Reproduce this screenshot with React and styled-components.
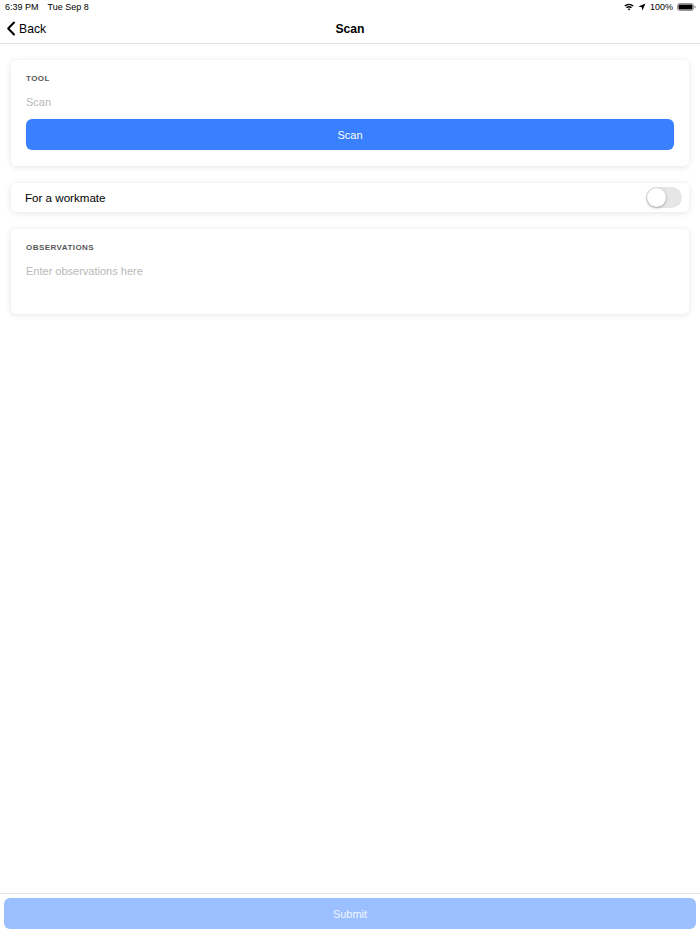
import React from "react";
import styled, { createGlobalStyle } from "styled-components";

const Global = createGlobalStyle`
  html, body { margin: 0; padding: 0; background: #ffffff; }
  body { font-family: "Liberation Sans", Arial, sans-serif; -webkit-font-smoothing: antialiased; }
  * { box-sizing: border-box; }
`;

const Page = styled.div`
  height: 934px;
  display: flex;
  flex-direction: column;
  background: #ffffff;
`;

const StatusBar = styled.div`
  height: 14px;
  padding: 0 4px 0 5px;
  display: flex;
  align-items: center;
  justify-content: space-between;
  font-size: 9px;
  color: #000;
`;

const StatusLeft = styled.div`
  display: flex;
  gap: 9px;
`;

const StatusRight = styled.div`
  display: flex;
  align-items: center;
  gap: 4px;
`;

const NavBar = styled.div`
  height: 30px;
  display: grid;
  grid-template-columns: 1fr auto 1fr;
  align-items: center;
  border-bottom: 1px solid #e4e4e4;
`;

const BackButton = styled.div`
  display: flex;
  align-items: center;
  gap: 3px;
  padding-left: 6px;
  font-size: 12.2px;
  color: #000;
`;

const Title = styled.div`
  font-size: 12.2px;
  font-weight: bold;
  color: #000;
`;

const Content = styled.div`
  flex: 1;
  padding: 16px 11px;
  display: flex;
  flex-direction: column;
  gap: 17px;
`;

const Card = styled.div`
  background: #fff;
  border-radius: 5px;
  box-shadow: 0 1px 6px rgba(0, 0, 0, 0.11);
  padding: ${(p) => p.$pad || "14px 15px 16px 15px"};
`;

const Label = styled.div`
  font-size: 8px;
  line-height: 10px;
  font-weight: bold;
  letter-spacing: 0.45px;
  color: #585858;
  text-transform: uppercase;
`;

const Placeholder = styled.div`
  margin-top: 8px;
  font-size: 11px;
  line-height: 20px;
  color: #b8b8b8;
  height: ${(p) => p.$h || "20px"};
`;

const PrimaryButton = styled.div`
  height: 31px;
  border-radius: 6px;
  background: ${(p) => (p.$disabled ? "#9cbfff" : "#3880ff")};
  color: ${(p) => (p.$disabled ? "#f2f6ff" : "#fff")};
  font-size: 11px;
  display: flex;
  align-items: center;
  justify-content: center;
  margin-top: ${(p) => p.$mt || "0"};
`;

const ToggleRow = styled.div`
  height: 29px;
  display: flex;
  align-items: center;
  justify-content: space-between;
  padding: 0 7px 0 14px;
  font-size: 11.6px;
  color: #000;
`;

const Track = styled.div`
  width: 36px;
  height: 21px;
  border-radius: 11px;
  background: #e6e6e6;
  display: flex;
  align-items: center;
  padding: 0 1px;
`;

const Knob = styled.div`
  width: 19px;
  height: 19px;
  border-radius: 50%;
  background: #fff;
  box-shadow: 0 1px 3px rgba(0, 0, 0, 0.28), 0 0 0 0.5px rgba(0, 0, 0, 0.08);
`;

const Footer = styled.div`
  border-top: 1px solid #e4e4e4;
  padding: 4px 4px 5px 4px;
`;

export default function App() {
  return (
    <Page>
      <Global />
      <StatusBar>
        <StatusLeft>
          <span>6:39 PM</span>
          <span>Tue Sep 8</span>
        </StatusLeft>
        <StatusRight>
          <svg width="10" height="8" viewBox="0 0 10 8">
            <path d="M0.3 2.6 A7 7 0 0 1 9.7 2.6 L8.7 3.6 A5.6 5.6 0 0 0 1.3 3.6 Z" fill="#000" />
            <path d="M2 4.3 A4.6 4.6 0 0 1 8 4.3 L7 5.3 A3.2 3.2 0 0 0 3 5.3 Z" fill="#000" />
            <path d="M3.7 6 A2 2 0 0 1 6.3 6 L5 7.4 Z" fill="#000" />
          </svg>
          <svg width="8" height="8" viewBox="0 0 8 8">
            <path d="M7.5 0.5 L0.5 3.6 L3.8 4.2 L4.4 7.5 Z" fill="#000" />
          </svg>
          <span>100%</span>
          <svg width="19" height="8" viewBox="0 0 19 8">
            <rect x="0.5" y="0.5" width="16" height="7" rx="2" fill="none" stroke="#000" strokeOpacity="0.4" />
            <rect x="1.5" y="1.5" width="14" height="5" rx="1" fill="#000" />
            <rect x="17.5" y="2.8" width="1.2" height="2.4" rx="0.5" fill="#000" fillOpacity="0.4" />
          </svg>
        </StatusRight>
      </StatusBar>
      <NavBar>
        <BackButton>
          <svg width="10" height="15" viewBox="0 0 10 15">
            <path d="M8 1.5 L2.2 7.5 L8 13.5" fill="none" stroke="#000" strokeWidth="2" strokeLinecap="round" strokeLinejoin="round" />
          </svg>
          <span>Back</span>
        </BackButton>
        <Title>Scan</Title>
        <div />
      </NavBar>
      <Content>
        <Card>
          <Label>Tool</Label>
          <Placeholder>Scan</Placeholder>
          <PrimaryButton $mt="7px">Scan</PrimaryButton>
        </Card>
        <Card $pad="0">
          <ToggleRow>
            <span>For a workmate</span>
            <Track>
              <Knob />
            </Track>
          </ToggleRow>
        </Card>
        <Card $pad="14px 15px 0 15px">
          <Label>Observations</Label>
          <Placeholder $h="53px">Enter observations here</Placeholder>
        </Card>
      </Content>
      <Footer>
        <PrimaryButton $disabled>Submit</PrimaryButton>
      </Footer>
    </Page>
  );
}
